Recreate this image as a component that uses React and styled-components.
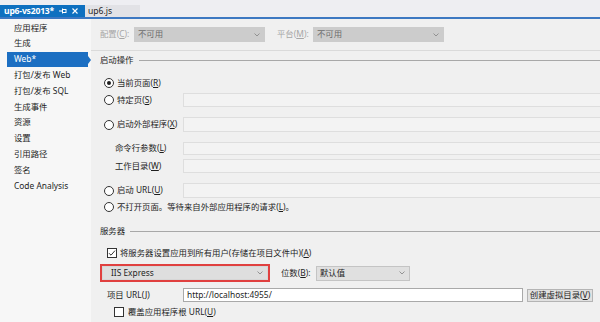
import React from 'react';
import styled, { createGlobalStyle } from 'styled-components';

const GlobalStyle = createGlobalStyle`
  html, body { margin: 0; padding: 0; }
  body {
    width: 600px;
    height: 322px;
    overflow: hidden;
    background: #f0f0f0;
    font: 400 8.4px/1 "Noto Sans", "Noto Sans CJK SC", sans-serif;
    color: #1e1e1e;
  }
`;

const Page = styled.div`
  display: flex;
  flex-direction: column;
  height: 322px;
`;

const TabStrip = styled.div`
  height: 17px;
  display: flex;
  align-items: flex-end;
  background: #eeeef2;
`;

const Tab = styled.div`
  height: 12px;
  width: ${p => p.$w}px;
  flex: none;
  box-sizing: border-box;
  display: flex;
  align-items: center;
  gap: 5px;
  white-space: nowrap;
  padding-left: ${p => (p.$active ? 4 : 3)}px;
  background: ${p => (p.$active ? '#0e70c0' : '#e2e2e6')};
  color: ${p => (p.$active ? '#fff' : '#1e1e1e')};
  font-weight: ${p => (p.$active ? 700 : 400)};
  font-size: 8.6px;
  letter-spacing: ${p => (p.$active ? '-0.2px' : '0')};
`;

const TabRule = styled.div`
  height: 2px;
  background: #3d78c2;
`;

const Body = styled.div`
  flex: 1;
  display: flex;
  min-height: 0;
`;

const Nav = styled.div`
  width: 91px;
  flex: none;
  background: #f7f7f7;
  padding-top: 1px;
  display: flex;
  flex-direction: column;
`;

const NavItem = styled.div`
  height: 15.8px;
  display: flex;
  align-items: center;
  padding-left: 14px;
  white-space: nowrap;
  ${p =>
    p.$active &&
    `
    position: relative;
    margin-left: 7px;
    width: 81px;
    box-sizing: border-box;
    padding-left: 7px;
    background: #1c6fc2;
    color: #fff;
    &::after {
      content: '';
      position: absolute;
      right: -3px;
      top: 4px;
      border-left: 3px solid #1c6fc2;
      border-top: 4px solid transparent;
      border-bottom: 4px solid transparent;
    }
  `}
`;

const Main = styled.div`
  flex: 1;
  padding-left: 9px;
  overflow: hidden;
  display: flex;
  flex-direction: column;
  background: #f0f0f0;
`;

const TopRow = styled.div`
  margin-top: 8px;
  height: 15px;
  display: flex;
  align-items: center;
`;

const Label = styled.span`
  flex: none;
  white-space: nowrap;
  color: ${p => (p.$dim ? '#a6a6a6' : '#1e1e1e')};
  width: ${p => p.$w}px;
  margin-left: ${p => p.$ml || 0}px;
`;

const Select = styled.div`
  width: ${p => p.$w}px;
  height: 15px;
  flex: none;
  box-sizing: border-box;
  display: flex;
  align-items: center;
  justify-content: space-between;
  padding: 0 4px 0 ${p => p.$pl || 3}px;
  background: ${p => (p.$dim ? '#cccccc' : '#e0e0e0')};
  border: 1px solid ${p => (p.$dim ? '#cccccc' : '#c4c4c4')};
  color: ${p => (p.$dim ? '#6d6d6d' : '#1e1e1e')};
`;

const Rule = styled.div`
  margin: 8px 0 0 -9px;
  height: 1px;
  background: #dadada;
`;

const GroupHeader = styled.div`
  margin-top: ${p => p.$mt}px;
  height: 12px;
  display: flex;
  align-items: center;
  gap: 5px;
  &::after {
    content: '';
    flex: 1;
    height: 1px;
    background: #a8a8a8;
  }
`;

const Row = styled.div`
  margin-top: ${p => p.$mt}px;
  height: ${p => p.$h}px;
  display: flex;
  align-items: center;
`;

const Choice = styled.label`
  width: ${p => (p.$wide ? 'auto' : '83px')};
  flex: none;
  box-sizing: border-box;
  padding-left: ${p => p.$pl}px;
  display: flex;
  align-items: center;
  gap: ${p => p.$gap || 3}px;
  white-space: nowrap;
`;

const Radio = styled.span`
  width: 10px;
  height: 10px;
  flex: none;
  box-sizing: border-box;
  border-radius: 50%;
  border: 1px solid #333;
  background: #fff;
  display: flex;
  align-items: center;
  justify-content: center;
  &::after {
    content: '';
    width: 4px;
    height: 4px;
    border-radius: 50%;
    background: ${p => (p.$on ? '#1e1e1e' : 'transparent')};
  }
`;

const Check = styled.span`
  width: 10px;
  height: 10px;
  flex: none;
  box-sizing: border-box;
  border: 1px solid #333;
  background: #fff;
  display: flex;
  align-items: center;
  justify-content: center;
`;

const Field = styled.div`
  flex: 1;
  align-self: stretch;
  border: 1px solid #dedede;
  border-right: none;
  background: #f3f3f3;
`;

const RedFrame = styled.div`
  width: 170px;
  height: 18px;
  flex: none;
  box-sizing: border-box;
  border: 2px solid #e0403f;
  display: flex;
  & > div {
    width: 100%;
    height: 100%;
    border-color: #d6d6d6;
    background: #dedede;
  }
`;

const Input = styled.div`
  width: 340px;
  height: 14px;
  flex: none;
  box-sizing: border-box;
  border: 1px solid #a9a9a9;
  background: #fff;
  display: flex;
  align-items: center;
  padding-left: 3px;
`;

const Button = styled.div`
  margin-left: 4px;
  width: 66px;
  height: 13px;
  flex: none;
  box-sizing: border-box;
  border: 1px solid #b4b4b4;
  background: #e1e1e1;
  display: flex;
  align-items: center;
  justify-content: center;
  white-space: nowrap;
`;

const U = styled.span`
  text-decoration: underline;
`;

const Chevron = () => (
  <svg width="6" height="4" viewBox="0 0 6 4">
    <polyline points="0.5,0.5 3,3 5.5,0.5" fill="none" stroke="#8a8a8a" strokeWidth="0.9" />
  </svg>
);

const Pin = () => (
  <svg width="8" height="6" viewBox="0 0 8 6">
    <line x1="0" y1="3" x2="3" y2="3" stroke="#fff" strokeWidth="1" />
    <rect x="3.5" y="1.5" width="3.5" height="3" fill="none" stroke="#fff" strokeWidth="1" />
    <line x1="3.5" y1="0.5" x2="3.5" y2="5.5" stroke="#fff" strokeWidth="1" />
  </svg>
);

const Close = () => (
  <svg width="6" height="6" viewBox="0 0 6 6">
    <path d="M0.5 0.5 L5.5 5.5 M5.5 0.5 L0.5 5.5" stroke="#fff" strokeWidth="1.1" />
  </svg>
);

const Tick = () => (
  <svg width="8" height="8" viewBox="0 0 8 8">
    <polyline points="1,4.2 3,6.2 7,1.6" fill="none" stroke="#333" strokeWidth="1" />
  </svg>
);

// text with an access-key letter underlined, e.g. 当前页面(R)
const Key = ({ text, k, tail = '' }) => (
  <span>{text}(<U>{k}</U>){tail}</span>
);

const navItems = [
  '应用程序', '生成', 'Web*', '打包/发布 Web', '打包/发布 SQL', '生成事件',
  '资源', '设置', '引用路径', '签名', 'Code Analysis',
];

export default function App() {
  return (
    <Page>
      <GlobalStyle />
      <TabStrip>
        <Tab $active $w={85}>
          <span>up6-vs2013*</span>
          <Pin />
          <Close />
        </Tab>
        <Tab $w={55}>up6.js</Tab>
      </TabStrip>
      <TabRule />
      <Body>
        <Nav>
          {navItems.map(item => (
            <NavItem key={item} $active={item === 'Web*'}>{item}</NavItem>
          ))}
        </Nav>
        <Main>
          <TopRow>
            <Label $dim $w={34}><Key text="配置" k="C" tail=":" /></Label>
            <Select $w={131} $dim>不可用<Chevron /></Select>
            <Label $dim $w={36} $ml={12}><Key text="平台" k="M" tail=":" /></Label>
            <Select $w={131} $dim>不可用<Chevron /></Select>
          </TopRow>
          <Rule />

          <GroupHeader $mt={3}>启动操作</GroupHeader>
          <Row $mt={10} $h={14}>
            <Choice $pl={4} $wide><Radio $on /><Key text="当前页面" k="R" /></Choice>
          </Row>
          <Row $mt={3} $h={14}>
            <Choice $pl={4}><Radio /><Key text="特定页" k="S" /></Choice>
            <Field />
          </Row>
          <Row $mt={10} $h={15}>
            <Choice $pl={4}><Radio /><Key text="启动外部程序" k="X" /></Choice>
            <Field />
          </Row>
          <Row $mt={10} $h={13}>
            <Choice $pl={15}><Key text="命令行参数" k="L" /></Choice>
            <Field />
          </Row>
          <Row $mt={4} $h={14}>
            <Choice $pl={15}><Key text="工作目录" k="W" /></Choice>
            <Field />
          </Row>
          <Row $mt={10} $h={15}>
            <Choice $pl={4}><Radio /><Key text="启动 URL" k="U" /></Choice>
            <Field />
          </Row>
          <Row $mt={2} $h={14}>
            <Choice $pl={4} $wide><Radio /><Key text="不打开页面。等待来自外部应用程序的请求" k="L" tail="。" /></Choice>
          </Row>

          <GroupHeader $mt={11}>服务器</GroupHeader>
          <Row $mt={10} $h={12}>
            <Choice $pl={7} $wide><Check><Tick /></Check><Key text="将服务器设置应用到所有用户(存储在项目文件中)" k="A" /></Choice>
          </Row>
          <Row $mt={5} $h={18}>
            <RedFrame>
              <Select $w={166} $pl={8}>IIS Express<Chevron /></Select>
            </RedFrame>
            <Label $w={35} $ml={11}><Key text="位数" k="B" tail=":" /></Label>
            <Select $w={94}>默认值<Chevron /></Select>
          </Row>
          <Row $mt={6} $h={14}>
            <Choice $pl={7}><Key text="项目 URL" k="J" /></Choice>
            <Input>http://localhost:4955/</Input>
            <Button><Key text="创建虚拟目录" k="V" /></Button>
          </Row>
          <Row $mt={4} $h={12}>
            <Choice $pl={14} $gap={4} $wide><Check /><Key text="覆盖应用程序根 URL" k="U" /></Choice>
          </Row>
        </Main>
      </Body>
    </Page>
  );
}
